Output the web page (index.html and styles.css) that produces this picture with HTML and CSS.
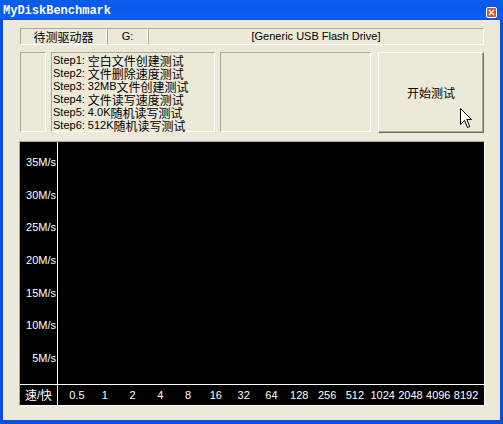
FILE: index.html
```html
<!DOCTYPE html>
<html>
<head>
<meta charset="utf-8">
<link rel="stylesheet" href="styles.css">
</head>
<body>
<div class="window">
  <div class="titlebar">
    <span class="title">MyDiskBenchmark</span>
    <span class="close">
      <svg width="11" height="11" viewBox="0 0 11 11">
        <rect x="0.5" y="0.5" width="10" height="10" rx="1.5" fill="#E0522C" stroke="#fff" stroke-width="1"/>
        <path d="M3 3 L8 8 M8 3 L3 8" stroke="#fff" stroke-width="1.6"/>
      </svg>
    </span>
  </div>
  <div class="frame">
    <div class="row1">
      <div class="field f1"><span class="zh">待测驱动器</span></div>
      <div class="field f2">G:</div>
      <div class="field f3">[Generic USB Flash Drive]</div>
    </div>
    <div class="row2">
      <div class="panel p1"></div>
      <div class="panel steps">
        <div class="step">Step1: <span class="zh">空白文件创建测试</span></div>
        <div class="step">Step2: <span class="zh">文件删除速度测试</span></div>
        <div class="step">Step3: 32MB<span class="zh">文件创建测试</span></div>
        <div class="step">Step4: <span class="zh">文件读写速度测试</span></div>
        <div class="step">Step5: 4.0K<span class="zh">随机读写测试</span></div>
        <div class="step">Step6: 512K<span class="zh">随机读写测试</span></div>
      </div>
      <div class="panel p3"></div>
      <button class="start"><span class="zh">开始测试</span></button>
    </div>
    <div class="chart">
      <div class="yaxis">
        <div class="ylab">35M/s</div>
        <div class="ylab">30M/s</div>
        <div class="ylab">25M/s</div>
        <div class="ylab">20M/s</div>
        <div class="ylab">15M/s</div>
        <div class="ylab">10M/s</div>
        <div class="ylab">5M/s</div>
      </div>
      <div class="plot"></div>
      <div class="xhead"><span class="zh">速</span>/<span class="zh">快</span></div>
      <div class="xticks">
        <span>0.5</span><span>1</span><span>2</span><span>4</span><span>8</span><span>16</span><span>32</span><span>64</span><span>128</span><span>256</span><span>512</span><span>1024</span><span>2048</span><span>4096</span><span>8192</span>
      </div>
    </div>
  </div>
  <svg class="cursor" width="13" height="21" viewBox="0 0 13 21">
    <path d="M0.5 0.5 L0.5 16.5 L4.5 12.5 L7.5 19.5 L9.8 18.5 L6.8 11.5 L11.5 11.5 Z" fill="#fff" stroke="#000" stroke-width="1" stroke-linejoin="miter"/>
  </svg>
</div>
</body>
</html>
```
FILE: styles.css
```css
html, body {
  margin: 0;
  padding: 0;
  background: #ffffff;
}

.window {
  position: relative;
  width: 503px;
  height: 424px;
  display: flex;
  flex-direction: column;
  font-family: "Liberation Sans", "Noto Sans CJK SC", sans-serif;
  font-size: 11px;
  color: #000;
}

.zh {
  font-family: "Noto Sans CJK SC", sans-serif;
  font-size: 12px;
}

.titlebar {
  flex: none;
  height: 20px;
  display: flex;
  background: linear-gradient(to bottom, #0A5CEA 0%, #0658EA 50%, #0C60F2 80%, #0F5FEE 90%, #0A50D8 100%);
}

.title {
  padding: 5px 0 0 3px;
  font-family: "Liberation Mono", monospace;
  font-weight: bold;
  font-size: 12px;
  line-height: 12px;
  color: #ffffff;
}

.close {
  margin: 7px 6px 0 auto;
  width: 11px;
  height: 11px;
  display: flex;
}

.frame {
  flex: 1;
  background: #ECE9D8;
  border-style: solid;
  border-color: #0B4FDC;
  border-width: 0 3px 4px 3px;
  padding: 8px 0 0 17px;
}

.row1 {
  display: flex;
  height: 17px;
}

.field {
  box-sizing: border-box;
  border: 1px solid;
  border-color: #ACA899 #ffffff #ffffff #ACA899;
  display: flex;
  align-items: center;
  justify-content: center;
  line-height: 15px;
}

.f1 { width: 87px; }
.f2 { width: 41px; }
.f3 { width: 336px; }

.row2 {
  display: flex;
  margin-top: 7px;
  height: 80px;
}

.panel {
  box-sizing: border-box;
  height: 80px;
  border: 1px solid;
  border-color: #ACA899 #ffffff #ffffff #ACA899;
}

.p1 { width: 26px; margin-right: 5px; }

.steps {
  width: 164px;
  margin-right: 5px;
  padding: 1px 0 0 1px;
  white-space: nowrap;
}

.step {
  height: 13px;
  line-height: 13px;
}

.step .zh {
  line-height: 13px;
  vertical-align: top;
}

.p3 { width: 151px; margin-right: 7px; }

.start {
  box-sizing: border-box;
  width: 106px;
  height: 81px;
  margin: 0;
  padding: 0;
  background: #ECE9D8;
  border: 1px solid;
  border-color: #ffffff #716F64 #716F64 #ffffff;
  box-shadow: inset -1px -1px 0 #ACA899;
  font-family: "Noto Sans CJK SC", sans-serif;
  color: #000;
  display: flex;
  align-items: center;
  justify-content: center;
}

.chart {
  box-sizing: border-box;
  width: 466px;
  margin: 9px 0 0 -1px;
  border: 1px solid;
  border-color: #ACA899 #ffffff #ffffff #ACA899;
  background: #000000;
  display: grid;
  grid-template-columns: 38px 1fr;
  grid-template-rows: 243px 20px;
  color: #ffffff;
}

.yaxis {
  box-sizing: border-box;
  border-right: 1px solid #ffffff;
  border-bottom: 1px solid #ffffff;
  padding: 4px 1px 0 0;
  display: flex;
  flex-direction: column;
}

.ylab {
  height: 32.6px;
  display: flex;
  align-items: center;
  justify-content: flex-end;
}

.plot {
  border-bottom: 1px solid #ffffff;
}

.xhead {
  box-sizing: border-box;
  border-right: 1px solid #ffffff;
  display: flex;
  align-items: center;
  justify-content: center;
  line-height: 20px;
}

.xticks {
  padding-left: 5px;
  display: grid;
  grid-template-columns: repeat(15, 27.8px);
  line-height: 20px;
  text-align: center;
}

.cursor {
  position: absolute;
  left: 460px;
  top: 108px;
}
```
